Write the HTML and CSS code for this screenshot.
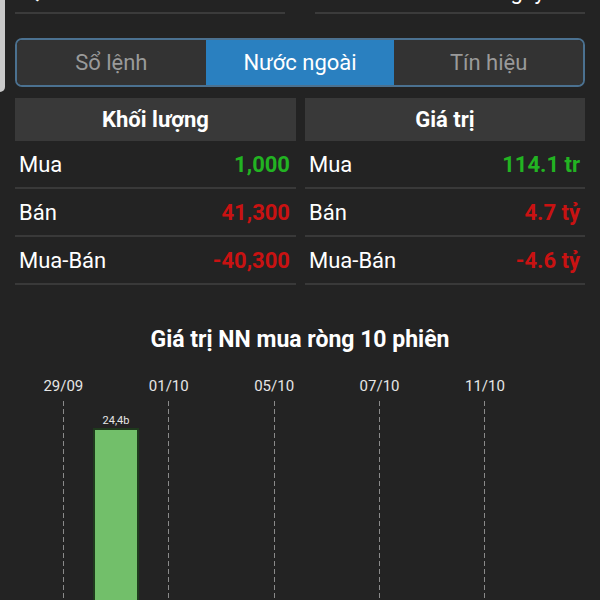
FILE: index.html
```html
<!DOCTYPE html>
<html lang="vi">

<head>
    <meta charset="UTF-8">
    <title>Nước ngoài</title>
    <link rel="stylesheet" href="styles.css">
</head>

<body>

    <!-- thanh cuộn bên trái -->
    <div class="edge"></div>

    <!-- bộ lọc (bị che phần trên) -->
    <div class="filters">
        <div class="field">Q1/2020</div>
        <div class="field field-right">Theo ngày</div>
    </div>

    <!-- tab -->
    <div class="tabs">
        <button class="tab">Sổ lệnh</button>
        <button class="tab active">Nước ngoài</button>
        <button class="tab">Tín hiệu</button>
    </div>

    <!-- bảng khối lượng / giá trị -->
    <div class="tables">
        <div class="table">
            <div class="table-head">Khối lượng</div>
            <div class="row"><span>Mua</span><span class="val up">1,000</span></div>
            <div class="row"><span>Bán</span><span class="val down">41,300</span></div>
            <div class="row"><span>Mua-Bán</span><span class="val down">-40,300</span></div>
        </div>
        <div class="table table-right">
            <div class="table-head">Giá trị</div>
            <div class="row"><span>Mua</span><span class="val up">114.1 tr</span></div>
            <div class="row"><span>Bán</span><span class="val down">4.7 tỷ</span></div>
            <div class="row"><span>Mua-Bán</span><span class="val down">-4.6 tỷ</span></div>
        </div>
    </div>

    <!-- biểu đồ -->
    <div class="chart">
        <h3 class="chart-title">Giá trị NN mua ròng 10 phiên</h3>
        <div class="plot">
            <div class="slot"><div class="date">29/09</div><div class="track"><div class="dash"></div></div></div>
            <div class="slot"><div class="date"></div><div class="track"><div class="bar-label">24,4b</div><div class="bar"></div></div></div>
            <div class="slot"><div class="date">01/10</div><div class="track"><div class="dash"></div></div></div>
            <div class="slot"><div class="date"></div><div class="track"></div></div>
            <div class="slot"><div class="date">05/10</div><div class="track"><div class="dash"></div></div></div>
            <div class="slot"><div class="date"></div><div class="track"></div></div>
            <div class="slot"><div class="date">07/10</div><div class="track"><div class="dash"></div></div></div>
            <div class="slot"><div class="date"></div><div class="track"></div></div>
            <div class="slot"><div class="date">11/10</div><div class="track"><div class="dash"></div></div></div>
            <div class="slot"><div class="date"></div><div class="track"></div></div>
        </div>
    </div>

</body>

</html>
```

FILE: styles.css
```css
body {
    margin: 0;
    height: 600px;
    overflow: hidden;
    background-color: #232323;
    color: #fff;
    font-family: Roboto, "Noto Sans", sans-serif;
}

.edge {
    position: fixed;
    left: 0;
    top: 0;
    width: 5px;
    height: 92px;
    background-color: #c9c9c9;
    border-bottom-right-radius: 5px;
}

.filters {
    display: grid;
    grid-template-columns: 1fr 1fr;
    gap: 30px;
    padding: 0 15px;
    margin-top: -30px;
}

.field {
    box-sizing: border-box;
    height: 44px;
    display: flex;
    align-items: flex-end;
    padding: 0 4px 9px 10px;
    border-bottom: 2px solid #3b3b3b;
    font-size: 22px;
    line-height: 1;
    overflow: hidden;
}

.field-right {
    justify-content: flex-end;
    padding-right: 40px;
}

.tabs {
    display: grid;
    grid-template-columns: 1fr 1fr 1fr;
    height: 49px;
    box-sizing: border-box;
    margin: 24px 15px 0;
    border: 2px solid #4b7190;
    border-radius: 7px;
    overflow: hidden;
}

.tab {
    border: none;
    background-color: #333;
    color: #9a9a9a;
    font-family: inherit;
    font-size: 22px;
    padding: 0;
}

.tab.active {
    background-color: #2a80c0;
    color: #fff;
}

.tables {
    display: grid;
    grid-template-columns: 281px 280px;
    gap: 9px;
    margin: 11px 15px 0;
}

.table-head {
    height: 43px;
    display: flex;
    align-items: center;
    justify-content: center;
    background-color: #393939;
    font-size: 22px;
    font-weight: bold;
}

.row {
    box-sizing: border-box;
    height: 48px;
    display: flex;
    align-items: center;
    justify-content: space-between;
    padding: 0 6px 0 4px;
    border-bottom: 2px solid #393939;
    font-size: 22px;
}

.table-right .row {
    padding-right: 5px;
}

.val {
    font-weight: bold;
}

.up {
    color: #22b322;
}

.down {
    color: #c91212;
}

.chart {
    margin-top: 42px;
}

.chart-title {
    margin: 0;
    text-align: center;
    font-size: 23px;
    line-height: 26px;
    font-weight: bold;
}

.plot {
    display: grid;
    grid-template-columns: repeat(10, 1fr);
    margin: 24px 36px 0 37px;
}

.slot {
    display: flex;
    flex-direction: column;
    align-items: center;
}

.date {
    height: 18px;
    font-size: 15px;
    line-height: 18px;
    color: #e6e6e6;
    white-space: nowrap;
}

.track {
    height: 220px;
    margin-top: 6px;
    display: flex;
    flex-direction: column;
    align-items: center;
}

.dash {
    width: 1px;
    flex: 1;
    background: repeating-linear-gradient(to bottom, #8a8a8a 0 5px, transparent 5px 8px);
}

.bar-label {
    margin-top: 13px;
    font-size: 11px;
    line-height: 13px;
    color: #e6e6e6;
}

.bar {
    flex: 1;
    width: 46px;
    box-sizing: border-box;
    margin-top: 1px;
    background-color: #72bf6a;
    border: 2px solid #1f3a1d;
    border-bottom: none;
}
```
